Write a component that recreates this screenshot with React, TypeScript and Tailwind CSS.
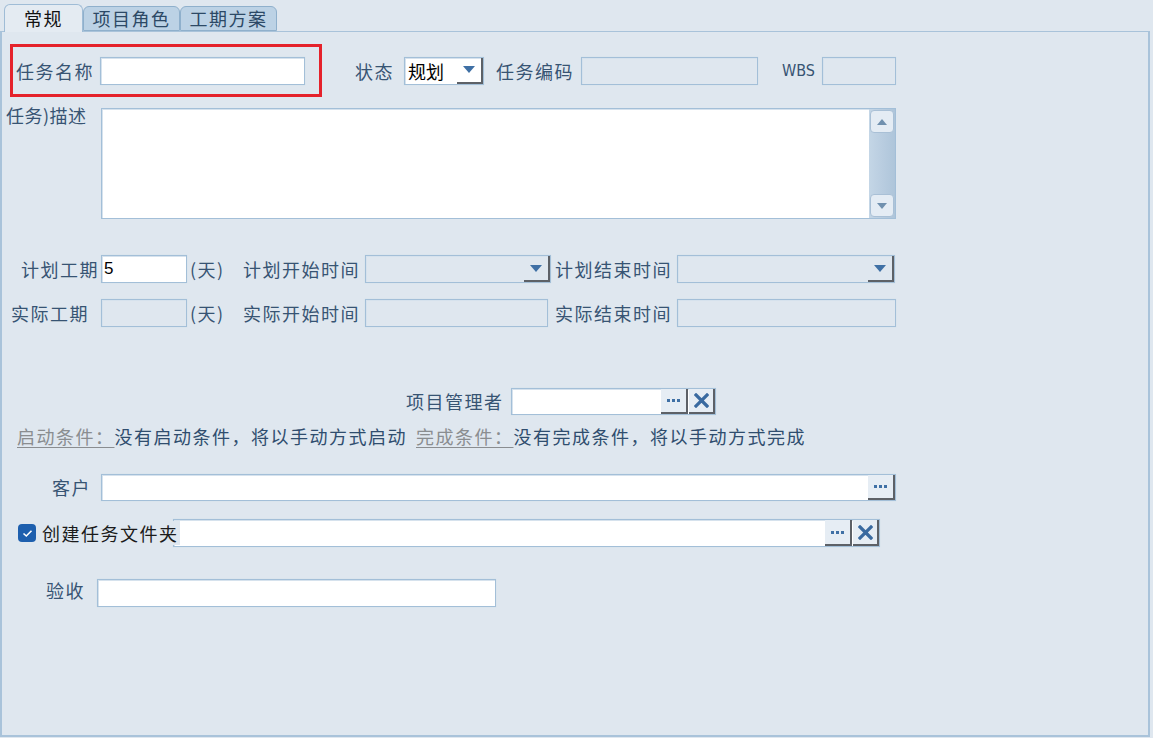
import React from "react";

const FONT = { fontFamily: '"Noto Sans CJK SC", "Noto Sans", sans-serif' };

function Box({
  w,
  h = 28,
  disabled = false,
  children,
  className = "",
}: {
  w: number;
  h?: number;
  disabled?: boolean;
  children?: React.ReactNode;
  className?: string;
}) {
  return (
    <div
      className={
        "flex shrink-0 items-stretch border border-[#a3bfd8] shadow-[inset_1px_1px_0_#d6e2ed,0_0_1px_#c7d8e7] " +
        (disabled ? "bg-[#dfe7ef] " : "bg-white ") +
        className
      }
      style={{ width: w, height: h }}
    >
      {children}
    </div>
  );
}

function Arrow() {
  return (
    <div className="ml-auto flex w-[26px] items-center justify-center border-r-2 border-b-2 border-[#5d6167] bg-transparent">
      <svg width="12" height="7" viewBox="0 0 12 7">
        <path d="M0 0 H12 L6 7 Z" fill="#3f70a5" />
      </svg>
    </div>
  );
}

function DotsBtn() {
  return (
    <div className="flex w-[27px] items-center justify-center border-r-2 border-b-2 border-[#5d6167] bg-[#e6edf4]">
      <svg width="13" height="3" viewBox="0 0 13 3">
        <rect x="0" y="0" width="3" height="3" fill="#3f70a5" />
        <rect x="5" y="0" width="3" height="3" fill="#3f70a5" />
        <rect x="10" y="0" width="3" height="3" fill="#3f70a5" />
      </svg>
    </div>
  );
}

function XBtn() {
  return (
    <div className="ml-[1px] flex w-[26px] items-center justify-center border-r-2 border-b-2 border-[#5d6167] bg-[#e6edf4]">
      <svg width="15" height="15" viewBox="0 0 15 15">
        <path d="M2 2 L13 13 M13 2 L2 13" stroke="#3a6aa0" strokeWidth="3.2" strokeLinecap="square" />
      </svg>
    </div>
  );
}

function Label({
  w,
  children,
  align = "left",
  className = "",
}: {
  w: number;
  children: React.ReactNode;
  align?: "left" | "right";
  className?: string;
}) {
  return (
    <div
      className={
        "shrink-0 whitespace-nowrap text-[18px] leading-[28px] tracking-[1.5px] text-[#375473] " +
        (align === "right" ? "text-right " : "") +
        className
      }
      style={{ width: w }}
    >
      {children}
    </div>
  );
}

export default function App() {
  return (
    <div className="flex h-[738px] w-[1153px] flex-col bg-[#dfe7ef]" style={FONT}>
      {/* tabs */}
      <div className="relative z-10 flex h-[31px] items-end pl-[4px]">
        <div className="-mb-[1px] flex h-[28px] w-[79px] items-center justify-center rounded-t-[6px] border border-b-0 border-[#9fbcd6] bg-[#e4ebf2] text-[18px] tracking-[1.5px] text-[#111]">
          常规
        </div>
        <div className="flex h-[25px] w-[97px] items-center justify-center rounded-t-[6px] border border-[#8fb0cc] bg-[#bcd2e5] text-[18px] tracking-[1.5px] text-[#2c4966]">
          项目角色
        </div>
        <div className="flex h-[25px] w-[97px] items-center justify-center rounded-t-[6px] border border-[#8fb0cc] bg-[#bcd2e5] text-[18px] tracking-[1.5px] text-[#2c4966]">
          工期方案
        </div>
      </div>

      {/* panel */}
      <div className="mb-[1px] mr-[3px] flex flex-1 flex-col border-2 border-t border-[#a9c3da]">
        {/* row 1 */}
        <div className="mt-[12px] flex items-center">
          <div className="ml-[8px] flex h-[53px] w-[312px] items-center border-[3px] border-[#e5222b] pl-[3px]">
            <Label w={84}>任务名称</Label>
            <Box w={205} />
          </div>
          <Label w={39} className="ml-[33px]">状态</Label>
          <Box w={80} className="ml-[10px]">
            <span className="pl-[3px] text-[18px] leading-[26px] text-black">规划</span>
            <Arrow />
          </Box>
          <Label w={80} className="ml-[12px]">任务编码</Label>
          <Box w={177} disabled className="ml-[5px]" />
          <div className="ml-[24px] w-[33px] text-[16px] text-[#375473]" style={{ fontFamily: '"DejaVu Sans Condensed", "Liberation Sans Narrow", sans-serif' }}>
            WBS
          </div>
          <Box w={74} disabled className="ml-[7px]" />
        </div>

        {/* description */}
        <div className="mt-[11px] flex items-start">
          <div className="ml-[4px] mt-[-2px] w-[92px] whitespace-nowrap text-[18px] leading-[18px] tracking-[0.5px] text-[#375473]">
            任务)描述
          </div>
          <div className="ml-[3px] flex h-[111px] w-[795px] border border-[#a3bfd8] bg-white shadow-[inset_1px_1px_0_#d6e2ed]">
            <div className="flex-1" />
            <div className="flex w-[26px] flex-col bg-gradient-to-r from-[#c4d6e6] via-[#b9cde0] to-[#aec5da] p-[1px]">
              <div className="flex h-[23px] items-center justify-center rounded-[4px] border border-[#a9c0d6] bg-[#e4ecf4]">
                <svg width="10" height="6" viewBox="0 0 10 6">
                  <path d="M0 6 H10 L5 0 Z" fill="#7090ae" />
                </svg>
              </div>
              <div className="flex-1" />
              <div className="flex h-[23px] items-center justify-center rounded-[4px] border border-[#a9c0d6] bg-[#e4ecf4]">
                <svg width="10" height="6" viewBox="0 0 10 6">
                  <path d="M0 0 H10 L5 6 Z" fill="#7090ae" />
                </svg>
              </div>
            </div>
          </div>
        </div>

        {/* plan row */}
        <div className="mt-[36px] flex items-center">
          <Label w={97} align="right">计划工期</Label>
          <Box w={86} className="ml-[2px]">
            <span className="pl-[2px] text-[17px] leading-[26px] text-black" style={{ fontFamily: '"Liberation Sans", sans-serif' }}>5</span>
          </Box>
          <Label w={40} className="ml-[3px]">(天)</Label>
          <Label w={122} className="ml-[13px]">计划开始时间</Label>
          <Box w={186} disabled>
            <Arrow />
          </Box>
          <Label w={122} className="ml-[4px]">计划结束时间</Label>
          <Box w={218} disabled>
            <Arrow />
          </Box>
        </div>

        {/* actual row */}
        <div className="mt-[16px] flex items-center">
          <Label w={90} className="ml-[9px]">实际工期</Label>
          <Box w={86} disabled className="ml-[0px]" />
          <Label w={40} className="ml-[3px]">(天)</Label>
          <Label w={122} className="ml-[13px]">实际开始时间</Label>
          <Box w={183} disabled />
          <Label w={122} className="ml-[7px]">实际结束时间</Label>
          <Box w={219} disabled />
        </div>

        {/* manager */}
        <div className="mt-[60px] flex items-center">
          <Label w={100} className="ml-[404px]">项目管理者</Label>
          <Box w={205} h={27} className="ml-[5px]">
            <div className="flex-1" />
            <DotsBtn />
            <XBtn />
          </Box>
        </div>

        {/* conditions */}
        <div className="ml-[15px] mt-[10px] flex whitespace-nowrap text-[18px] leading-[22px] tracking-[1.5px]">
          <span className="text-[#8a8d90] underline decoration-[#8a8d90] underline-offset-[3px]">启动条件：</span>
          <span className="text-[#2f4d6e]">没有启动条件，将以手动方式启动</span>
          <span className="ml-[9px] text-[#8a8d90] underline decoration-[#8a8d90] underline-offset-[3px]">完成条件：</span>
          <span className="text-[#2f4d6e]">没有完成条件，将以手动方式完成</span>
        </div>

        {/* customer */}
        <div className="mt-[26px] flex items-center">
          <Label w={46} className="ml-[50px]">客户</Label>
          <Box w={795} h={27} className="ml-[3px]">
            <div className="flex-1" />
            <DotsBtn />
          </Box>
        </div>

        {/* folder */}
        <div className="mt-[18px] flex items-center">
          <div className="ml-[16px] flex h-[18px] w-[18px] items-center justify-center rounded-[4px] bg-[#1d5fae]">
            <svg width="11" height="9" viewBox="0 0 11 9">
              <path d="M1.5 4.5 L4.3 7 L9.5 1.8" stroke="#ffffff" strokeWidth="1.6" fill="none" />
            </svg>
          </div>
          <div className="relative z-10 ml-[6px] w-[138px] whitespace-nowrap bg-[#dfe7ef] text-[18px] leading-[24px] tracking-[1.5px] text-[#1b1b1b]">
            创建任务文件夹
          </div>
          <Box w={707} className="ml-[-7px]">
            <div className="flex-1" />
            <DotsBtn />
            <XBtn />
          </Box>
        </div>

        {/* acceptance */}
        <div className="mt-[33px] flex items-start">
          <div className="ml-[44px] w-[42px] whitespace-nowrap text-[18px] leading-[20px] tracking-[1.5px] text-[#375473]">验收</div>
          <Box w={399} className="ml-[9px] mt-[-1px]" />
        </div>
      </div>
    </div>
  );
}
